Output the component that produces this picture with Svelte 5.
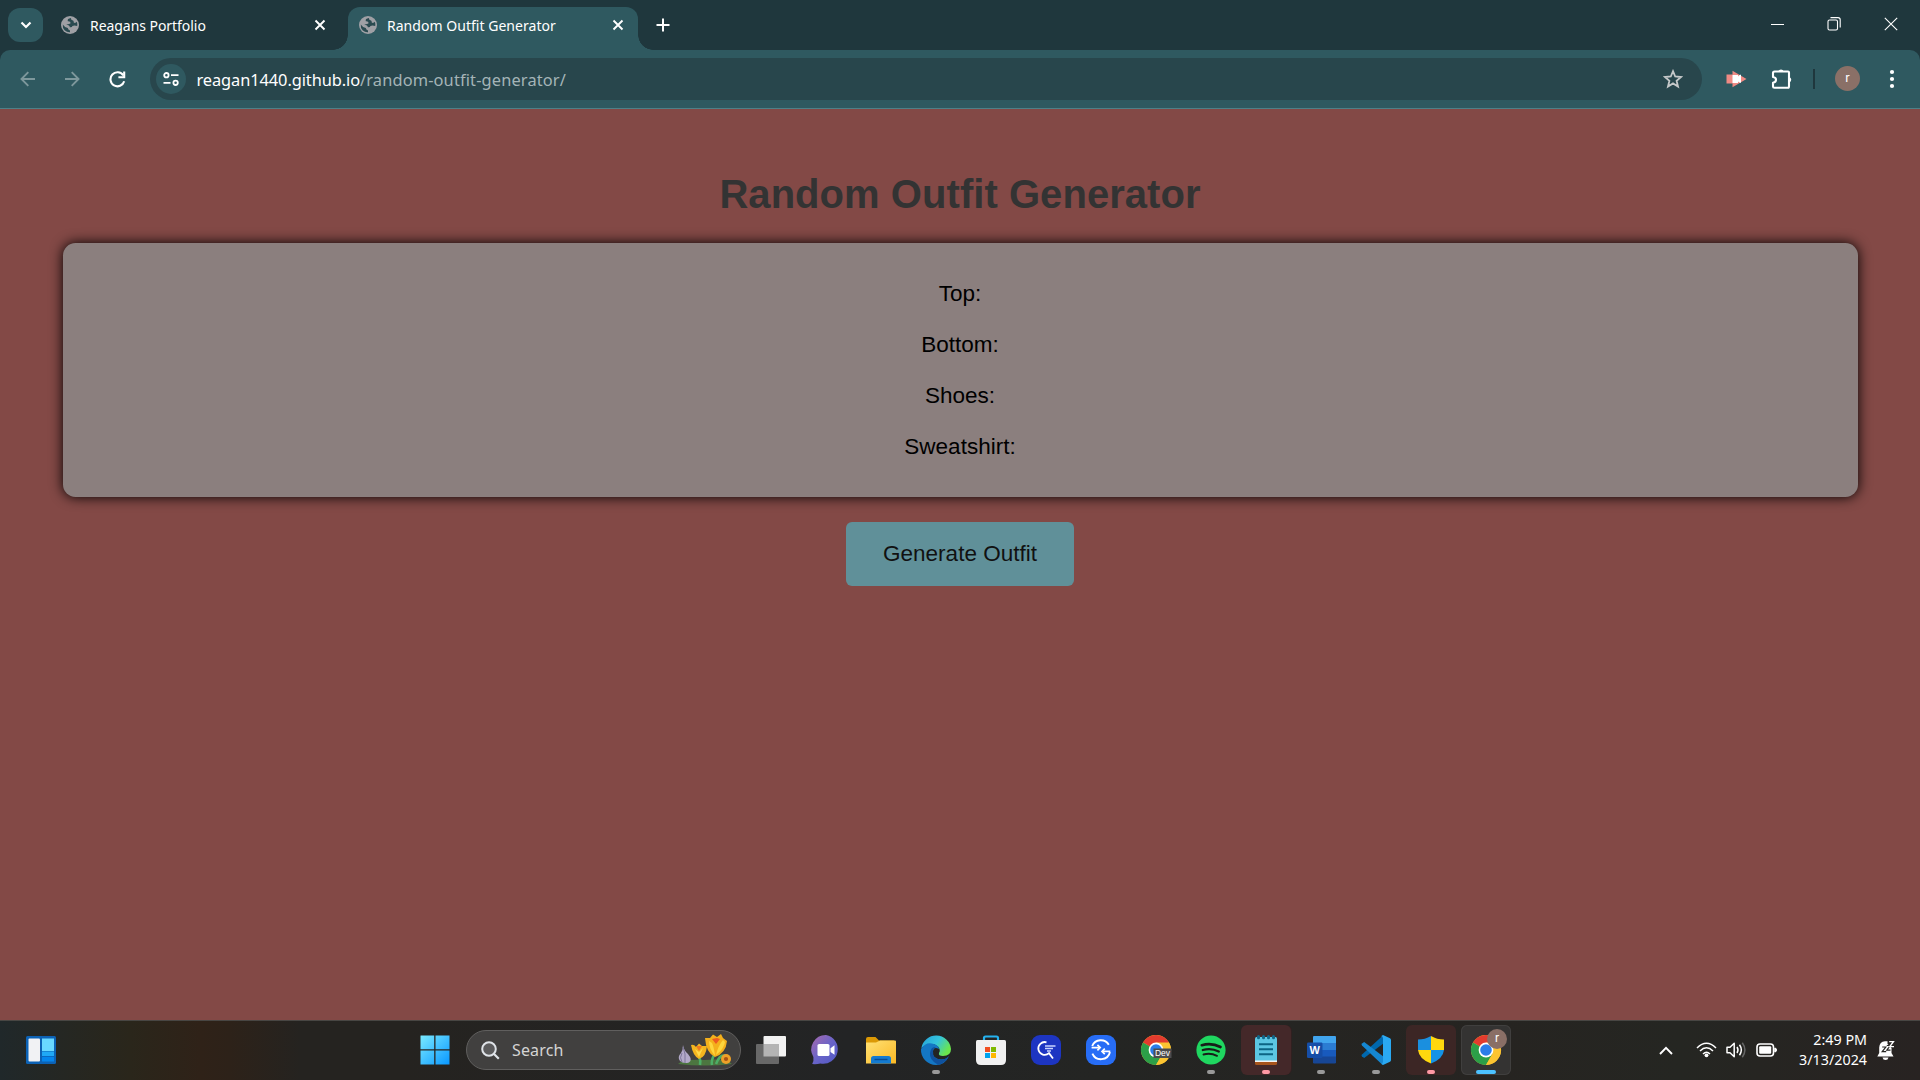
<script>
  const lines = ['Top:', 'Bottom:', 'Shoes:', 'Sweatshirt:'];
  const apps = [
    { id: 'taskview' },
    { id: 'chat' },
    { id: 'files' },
    { id: 'edge', mark: 'idle' },
    { id: 'store' },
    { id: 'search' },
    { id: 'sync' },
    { id: 'dev' },
    { id: 'spotify', mark: 'idle' },
    { id: 'notepad', mark: 'alert', stacked: true },
    { id: 'word', mark: 'idle' },
    { id: 'code', mark: 'idle' },
    { id: 'shield', mark: 'alert' },
    { id: 'chrome', mark: 'active' },
  ];
</script>

{#snippet globe()}
  <svg class="globe" width="18" height="18" viewBox="0 0 18 18">
    <circle cx="9" cy="9" r="9" fill="#9fa0a5" />
    <path d="M10 1.9 Q6 2.4 6.8 5.2 Q9.8 5 9.6 7.2 Q8.8 8.3 5.2 8.5 Q8.8 9.2 8.8 11.2 Q11.3 11.6 11.4 9.9 Q13.3 9 16.2 9.9 Q16.6 7.8 15.8 5.8 Q14 7.8 12.6 6.2 Q13.3 4.6 11.4 4.2 Q9.6 3.8 10 1.9Z M1.8 8.4 Q1.4 12 3.6 14.2 Q6 16.4 9 16.2 L9 14.4 Q6.9 13.8 6.8 12 Q3.7 11.4 1.8 8.4Z" fill="#2a4a50" />
  </svg>
{/snippet}

{#snippet cross()}
  <svg class="cross" width="12" height="12" viewBox="0 0 12 12"><path d="M1.5 1.5 L10.5 10.5 M10.5 1.5 L1.5 10.5" stroke="#fff" stroke-width="1.9" fill="none" /></svg>
{/snippet}

{#snippet chromeMark()}
  <circle cx="15" cy="15" r="15" fill="#fbc02d" />
  <path d="M15 15 L2 7.5 A15 15 0 0 1 28 7.5 Z" fill="#e33b2e" />
  <path d="M15 15 L2 7.5 A15 15 0 0 0 15 30 L22 18 Z" fill="#2c9f48" />
  <path d="M15 7.5 H28 A15 15 0 0 1 15 30 L21.5 18.7 Z" fill="#fcc431" />
  <circle cx="15" cy="15" r="7.4" fill="#fff" />
  <circle cx="15" cy="15" r="5.8" fill="#2b7de9" />
{/snippet}

<div class="screen">
  <header class="tabs">
    <button class="tabsearch" aria-label="Search tabs">
      <svg width="12" height="8" viewBox="0 0 12 8"><path d="M1.5 1.5 L6 6 L10.5 1.5" fill="none" stroke="#fff" stroke-width="2.2" /></svg>
    </button>
    <div class="tab first">{@render globe()}<span class="title">Reagans Portfolio</span>{@render cross()}</div>
    <div class="tab active">{@render globe()}<span class="title">Random Outfit Generator</span>{@render cross()}</div>
    <svg class="plus" width="14" height="14" viewBox="0 0 14 14"><path d="M7 0.5 V13.5 M0.5 7 H13.5" stroke="#fff" stroke-width="2" /></svg>
    <div class="winctl">
      <svg width="13" height="14" viewBox="0 0 13 14"><path d="M0 7.5 H13" stroke="#fff" stroke-width="1" /></svg>
      <svg width="14" height="14" viewBox="0 0 14 14"><rect x="1" y="3" width="9.5" height="10" rx="1.5" fill="none" stroke="#fff" stroke-width="1.1" /><path d="M3.5 0.6 H11 Q13.2 0.6 13.2 2.8 V10.5" fill="none" stroke="#fff" stroke-width="1.1" /></svg>
      <svg width="14" height="14" viewBox="0 0 14 14"><path d="M0.8 0.8 L13.2 13.2 M13.2 0.8 L0.8 13.2" stroke="#fff" stroke-width="1.1" /></svg>
    </div>
  </header>

  <nav class="toolbar">
    <svg class="back" width="16" height="16" viewBox="0 0 16 16"><path d="M15 8 H2 M8.3 1.2 L1.5 8 L8.3 14.8" fill="none" stroke="#7e989c" stroke-width="1.9" /></svg>
    <svg class="fwd" width="16" height="16" viewBox="0 0 16 16"><path d="M1 8 H14 M7.7 1.2 L14.5 8 L7.7 14.8" fill="none" stroke="#7e989c" stroke-width="1.9" /></svg>
    <svg class="reload" width="17" height="17" viewBox="0 0 17 17"><path d="M14.3 4.4 A7 7 0 1 0 15.2 10.3" fill="none" stroke="#fff" stroke-width="2.1" /><path d="M15.2 0.5 V6.3 H9.4" fill="none" stroke="#fff" stroke-width="2.1" /></svg>
    <div class="omnibox">
      <span class="site">
        <svg width="16" height="14" viewBox="0 0 16 14"><g fill="none" stroke="#fff" stroke-width="1.8"><circle cx="3.4" cy="3.2" r="2.2" /><path d="M8 3.2 H15.5 M0.5 10.8 H7.5" /><circle cx="12.6" cy="10.8" r="2.2" /></g></svg>
      </span>
      <span class="host">reagan1440.github.io</span><span class="path">/random-outfit-generator/</span>
      <svg class="star" width="20" height="20" viewBox="0 0 20 20"><path d="M10 2.2 L12.2 7.5 L18 8 L13.6 11.8 L15 17.5 L10 14.4 L5 17.5 L6.4 11.8 L2 8 L7.8 7.5 Z" fill="none" stroke="#c5c8c9" stroke-width="1.8" /></svg>
    </div>
    <svg class="ext" width="21" height="18" viewBox="0 0 21 18"><path d="M0.5 4.5 H6.5 V0.8 L20.5 9 L6.5 17.2 V13.5 H0.5Z" fill="#f08a84" /><path d="M6.5 5 H12 V6.5 L14 4.8 H15 V12.8 H14 L12 11.4 V13 H6.5Z" fill="#fff" /></svg>
    <svg class="puzzle" width="22" height="22" viewBox="0 0 22 22"><path d="M3.5 3.5 H17 Q18 3.5 18 4.5 V18 Q18 19.8 17 19.8 H3.5 Q2 19.8 2 18.5 V14.8 Q5 14.3 5 11.8 Q5 9.4 2 9 V5 Q2 3.5 3.5 3.5Z" fill="none" stroke="#fff" stroke-width="2.1" stroke-linejoin="round" /><path d="M7.3 3.5 A2.8 2.8 0 0 1 12.7 3.5Z M18 9 A2.8 2.8 0 0 1 18 14.5Z" fill="#fff" /></svg>
    <span class="divider"></span>
    <span class="avatar">r</span>
    <svg class="more" width="6" height="20" viewBox="0 0 6 20"><circle cx="3" cy="3" r="2.1" fill="#fff" /><circle cx="3" cy="10" r="2.1" fill="#fff" /><circle cx="3" cy="17" r="2.1" fill="#fff" /></svg>
  </nav>

  <main>
    <h1>Random Outfit Generator</h1>
    <section class="outfit">
      {#each lines as line}<p>{line}</p>{/each}
    </section>
    <button class="generate">Generate Outfit</button>
  </main>

  <footer>
    <svg class="widgets" width="30" height="28" viewBox="0 0 30 28"><rect width="30" height="28" rx="1.5" fill="#0c62b5" /><rect x="2.5" y="2.5" width="11.5" height="23" rx="1" fill="#f1f2f4" /><rect x="16" y="2.5" width="12" height="12.5" fill="#69d8ff" /><rect x="16" y="15.5" width="12" height="4.5" fill="#20a9f6" /><rect x="16" y="20.7" width="12" height="4.8" rx=".5" fill="#0585ec" /></svg>
    <svg class="start" width="30" height="30" viewBox="0 0 30 30">
      <defs><linearGradient id="win" x1="0" y1="0" x2="30" y2="30" gradientUnits="userSpaceOnUse"><stop offset="0" stop-color="#7cebff" /><stop offset="1" stop-color="#0796ff" /></linearGradient></defs>
      <path d="M0.8 0.5 H14.2 V14.2 H0.5 V0.8Z M15.5 0.5 H29.5 V14.2 H15.5Z M0.5 15.5 H14.2 V29.5 H0.5Z M15.5 15.5 H29.5 V29.5 H15.5Z" fill="url(#win)" />
    </svg>
    <div class="searchbox">
      <svg width="19" height="19" viewBox="0 0 19 19"><circle cx="8" cy="8" r="6.8" fill="#5b5b5c" stroke="#dfe3e8" stroke-width="2" /><path d="M12.8 12.8 L17.8 17.8" stroke="#dfe3e8" stroke-width="2.2" /></svg>
      <span>Search</span>
      <svg class="flowers" width="56" height="34" viewBox="0 0 56 34">
        <path d="M1 31 Q6 26 27 27 Q50 25 55 31 Q28 34 1 31Z" fill="#4c7640" />
        <path d="M22 23 Q24 28 23 32 M37 22 Q34 28 35 32 M48 23 Q43 21 39 31" stroke="#4dae66" stroke-width="2.6" fill="none" />
        <path d="M6 12 Q7 18 11 21 Q16 27 12 29.5 Q6 31 3 28 Q0 24 4 20 Q6 17 6 12Z" fill="#b3aac9" /><path d="M6 14 Q9 20 8 30 M5 20 Q2 25 5 29" stroke="#7d7699" fill="none" />
        <path d="M14 12 Q17 11 19 14 L22 10.5 L25 13 L30 13 Q29 24 22 26 Q16 23 14 12Z" fill="#f4b51f" /><path d="M18 16 L22 24 L26 15 L22 19Z" fill="#fed94a" /><path d="M19 13 L22 18 L25 13Z" fill="#ee7a21" />
        <path d="M28 5 L33 5 L36 1.5 L40 4 L44 1 L46 5 L50 8 Q49 20 38 24 Q29 20 28 5Z" fill="#f4b01c" /><path d="M32 8 Q32 16 38 23 Q37 14 35 10Z M46 7 Q41 13 39 22 Q47 16 48 9Z" fill="#fdd63d" /><path d="M35 6 L39 11 L43 6 L40 5Z" fill="#ed5b21" />
        <circle cx="49" cy="26" r="5" fill="#eea028" /><circle cx="49" cy="26" r="2.1" fill="#a65114" />
      </svg>
    </div>

    <div class="apps">
      {#each apps as app}
        <div class="app {app.mark ?? ''}" class:stacked={app.stacked}>
          <svg width="36" height="36" viewBox="-3 -3 36 36">
            {#if app.id === 'taskview'}
              <rect x="7.5" y="1" width="22.5" height="20.5" rx="1" fill="#f2f2f2" /><rect x="0" y="9" width="23" height="20" rx="1" fill="#686868" /><path d="M7.5 9 H23 V21.5 H7.5Z" fill="#b4b4b4" />
            {:else if app.id === 'chat'}
              <defs><linearGradient id="chat" x1="0" y1="0" x2="1" y2="1"><stop offset="0" stop-color="#a969ac" /><stop offset=".5" stop-color="#6a64c8" /><stop offset="1" stop-color="#5058c4" /></linearGradient></defs>
              <path d="M15 0 A14.5 14.5 0 1 1 9.5 28.5 Q5 29.5 1.2 29 Q3 26 2.4 22 A14.5 14.5 0 0 1 15 0Z" fill="url(#chat)" /><rect x="6.5" y="9" width="12" height="12" rx="1.6" fill="#fff" /><path d="M19.5 13.2 L23.5 10.2 V19.8 L19.5 17Z" fill="#fff" />
            {:else if app.id === 'files'}
              <path d="M0 4 Q0 2 2 2 H9.5 L13 5.5 H28 V14 H0Z" fill="#dc9905" /><defs><linearGradient id="fold" x1="0" y1="0" x2="1" y2="1"><stop offset="0" stop-color="#ffe175" /><stop offset="1" stop-color="#fbb924" /></linearGradient></defs><path d="M0 7.5 H10 L14 5.5 H29 Q30 5.5 30 6.5 V28.5 H0Z" fill="url(#fold)" /><path d="M5 28.5 V23.5 Q5 21 7.5 21 H22.5 Q25 21 25 23.5 V28.5Z" fill="#147bd1" /><path d="M8.5 24.5 H21.5" stroke="#084c95" stroke-width="1.4" />
            {:else if app.id === 'edge'}
              <defs><linearGradient id="e1" x1="0" y1="0" x2="1" y2=".5"><stop offset="0" stop-color="#259fd9" /><stop offset=".55" stop-color="#34c4dc" /><stop offset="1" stop-color="#6ae64d" /></linearGradient></defs>
              <path d="M0.3 13 A15 15 0 0 1 30 14 Q30 21 22 21 Q17 21 18 18 Q20 15 17 11.5 Q10 6 0.3 13Z" fill="url(#e1)" />
              <path d="M0 14 Q5 6 13 9 Q18 11 18 14 Q13 11 12 16 Q11 24 20 24.5 Q25 24.5 28 21 Q24 30 15 30 A15 15 0 0 1 0 14Z" fill="#1477c4" /><path d="M12 16 Q11 24 20 24.5 Q25 24.5 28 21 Q24 29 17 29.7 Q8 25 9 18 Q10 11 15 12 Q12 13 12 16Z" fill="#0f529f" />
            {:else if app.id === 'store'}
              <path d="M8 7 V3 Q8 1.5 9.5 1.5 H20.5 Q22 1.5 22 3 V7" fill="none" stroke="#25b2ef" stroke-width="2.2" /><path d="M0 6.5 Q0 5 1.5 5 H28.5 Q30 5 30 6.5 V25 Q30 30 25 30 H5 Q0 30 0 25Z" fill="#f1f1f1" /><path d="M9 12 H14 V17 H9Z" fill="#f14f21" /><path d="M15 12 H20 V17 H15Z" fill="#7eb900" /><path d="M9 18 H14 V23 H9Z" fill="#00a3ee" /><path d="M15 18 H20 V23 H15Z" fill="#feb800" />
            {:else if app.id === 'search'}
              <rect width="30" height="30" rx="9" fill="#1d35c2" /><path d="M15.5 7.3 A6.4 6.4 0 1 0 18 18.2 L22 23.5" fill="none" stroke="#fff" stroke-width="1.8" /><path d="M14 11 H24.5 M14 13.5 H22 M16 16 H20" stroke="#c9d3ff" stroke-width="1.4" />
            {:else if app.id === 'sync'}
              <rect width="30" height="30" rx="9" fill="#276df6" /><path d="M5.6 12.6 H13 M6.2 11 A9.3 9.3 0 0 1 22.8 9.8 M24.3 16.4 H17 M24 17 A9.3 9.3 0 0 1 6.4 18.6" fill="none" stroke="#fff" stroke-width="1.9" /><path d="M11.4 9.8 L14.2 12.6 L11.4 15.4 M18.8 13.6 L16 16.4 L18.8 19.2" fill="none" stroke="#fff" stroke-width="1.7" />
            {:else if app.id === 'dev'}
              {@render chromeMark()}<rect x="12.5" y="13.5" width="18" height="9.5" fill="#4c4c4e" /><text class="dev" x="21.5" y="21" text-anchor="middle">Dev</text>
            {:else if app.id === 'spotify'}
              <circle cx="15" cy="15" r="14.6" fill="#1fd760" /><path d="M5.8 10.2 Q15.5 7.4 24.5 12" stroke="#171d19" stroke-width="2.7" fill="none" stroke-linecap="round" /><path d="M6.8 15 Q15 12.5 22.8 16.5" stroke="#171d19" stroke-width="2.3" fill="none" stroke-linecap="round" /><path d="M7.5 19.5 Q14.5 17.5 21 20.8" stroke="#171d19" stroke-width="1.9" fill="none" stroke-linecap="round" />
            {:else if app.id === 'notepad'}
              <path d="M4 25 H26 V28.5 Q26 30 24.5 30 H5.5 Q4 30 4 28.5Z" fill="#a7541c" /><path d="M4 25 H26 V27 H4Z" fill="#f4f4f4" /><path d="M4 4 Q4 2 5.5 2 H24.5 Q26 2 26 4 V25.5 H4Z" fill="#5cc6e3" /><path d="M8 9.2 H22 M8 14.2 H22 M8 19.2 H22" stroke="#0c6484" stroke-width="1.9" /><path d="M7.5 1.6 V2.8 M12.5 1.6 V2.8 M17.5 1.6 V2.8 M22.5 1.6 V2.8" stroke="#12688a" stroke-width="3" stroke-linecap="round" />
            {:else if app.id === 'word'}
              <rect x="7" y="1" width="23" height="27.5" rx="1.2" fill="#174695" /><path d="M7 15 H30 V21.5 H7Z" fill="#185abd" /><path d="M7 8 H30 V15 H7Z" fill="#2b7cd3" /><path d="M8.2 1 H28.8 Q30 1 30 2.2 V8 H7 V2.2 Q7 1 8.2 1Z" fill="#41a5ee" /><rect x="1" y="7.5" width="15.5" height="15.5" rx="1.2" fill="#164ea7" /><text class="word" x="8.6" y="18.7" text-anchor="middle">W</text>
            {:else if app.id === 'code'}
              <path d="M22 0.5 V8.7 L3.2 23 L1 21.5 Q0 20.5 1 19.5Z" fill="#0068ae" /><path d="M22 29.5 V21.3 L3.2 7 L1 8.5 Q0 9.5 1 10.5 L20 28.5Z" fill="#1587d2" /><path d="M22 0 L29 3.3 Q30 3.8 30 5 V25 Q30 26.2 29 26.7 L22 30 L20 28.8 Q22 29 22 26.5 V3.5 Q22 1 20 1.2Z" fill="#2aa9f2" />
            {:else if app.id === 'shield'}
              <path d="M15 1 Q9 4.5 2 4.5 V15 H15Z" fill="#1a8fdf" /><path d="M15 1 Q21 4.5 28 4.5 V15 H15Z" fill="#ffd80e" /><path d="M2 15 H15 V28.5 Q3 24 2 15Z" fill="#ffd80e" /><path d="M28 15 H15 V28.5 Q27 24 28 15Z" fill="#1493e6" />
            {:else}
              {@render chromeMark()}
            {/if}
          </svg>
          {#if app.id === 'chrome'}<span class="badge">r</span>{/if}
          {#if app.mark}<i></i>{/if}
        </div>
      {/each}
    </div>

    <div class="tray">
      <svg class="up" width="14" height="9" viewBox="0 0 14 9"><path d="M1 8 L7 1.8 L13 8" fill="none" stroke="#fff" stroke-width="1.9" /></svg>
      <svg class="wifi" width="21" height="16" viewBox="0 0 21 16"><g fill="none" stroke="#fff" stroke-width="1.5"><path d="M1 6 Q10.5 -3.5 20 6" /><path d="M4 9 Q10.5 2.5 17 9" /><path d="M7 12 Q10.5 8.5 14 12" /></g><circle cx="10.5" cy="13.3" r="1.9" fill="#fff" /></svg>
      <svg class="vol" width="21" height="18" viewBox="0 0 21 18"><g fill="none" stroke="#fff" stroke-width="1.5"><path d="M1 6.2 H4 L8.2 2.3 V15.7 L4 11.8 H1Z" stroke-linejoin="round" /><path d="M11 6 Q13 9 11 12 M13.5 3.8 Q17.2 9 13.5 14.2" /><path d="M16.3 1.7 Q21.5 9 16.3 16.3" stroke="#666" /></g></svg>
      <svg class="bat" width="21" height="14" viewBox="0 0 21 14"><rect x="1" y="1" width="16.5" height="12" rx="3" fill="none" stroke="#fff" stroke-width="1.6" /><rect x="3.2" y="3.2" width="12" height="7.6" rx="1" fill="#fff" /><path d="M18.8 5 Q20.5 5 20.5 7 Q20.5 9 18.8 9Z" fill="#fff" stroke="#fff" /></svg>
      <div class="clock"><span>2:49 PM</span><span>3/13/2024</span></div>
      <svg class="bell" width="19" height="21" viewBox="0 0 19 21"><path d="M2.2 13 V7.5 Q2.5 1.8 8 1.2 H10.5 V4 L14.5 8 V13 L16.5 16.5 H0.3Z" fill="#fff" /><path d="M5.5 17.5 H11.5 Q11 20 8.5 20 Q6 20 5.5 17.5Z" fill="#fff" /><path d="M5.2 7 H8.8 L5.2 11.6 H9.2" stroke="#262522" stroke-width="1.2" fill="none" /><path d="M9.8 5.5 H13.2 L9.8 10.2 H13.5" stroke="#262522" stroke-width="1.2" fill="none" /><path d="M12.2 1.6 H16.4 L12.8 6.6 H17" stroke="#fff" stroke-width="1.4" fill="none" /></svg>
    </div>
  </footer>
</div>

<style>
  :global(body) { margin: 0; }
  .screen { width: 1920px; height: 1080px; display: flex; flex-direction: column; overflow: hidden; background: #834946; font-family: 'Noto Sans', sans-serif; color: #fff; }
  button { border: 0; padding: 0; font: inherit; }
  svg { display: block; flex: none; }

  .tabs { height: 50px; flex: none; display: flex; background: #1f373d; box-sizing: border-box; padding-left: 8px; }
  .tabsearch { width: 35px; height: 34px; margin-top: 8px; border-radius: 12px; background: #2f5960; display: flex; align-items: center; justify-content: center; }
  .tab { box-sizing: border-box; display: flex; align-items: center; height: 42px; margin-top: 8px; padding-bottom: 8px; font-size: 14px; }
  .tab.first { width: 305px; padding-left: 18px; }
  .tab.active { position: relative; width: 290px; margin-top: 7px; height: 43px; padding: 1px 0 8px 11px; background: #2f5960; border-radius: 12px 12px 0 0; }
  .tab.active::before, .tab.active::after { content: ''; position: absolute; bottom: 0; width: 15px; height: 15px; }
  .tab.active::before { left: -15px; background: radial-gradient(circle at 0 0, transparent 14.5px, #2f5960 15px); }
  .tab.active::after { right: -15px; background: radial-gradient(circle at 100% 0, transparent 14.5px, #2f5960 15px); }
  .title { margin-left: 11px; padding-top: 2px; white-space: nowrap; line-height: 20px; }
  .first .title { letter-spacing: -0.05px; }
  .active .title { margin-left: 10px; letter-spacing: 0.03px; }
  .cross { margin-left: auto; }
  .first .cross { margin-right: 22px; }
  .active .cross { margin-right: 14px; }
  .plus { margin: 18px 0 0 18px; }
  .winctl { margin: 17px 22px 0 auto; display: flex; gap: 43px; }

  .toolbar { height: 59px; flex: none; box-sizing: border-box; display: flex; align-items: center; background: #1f373d; border-bottom: 1px solid #4f8088; position: relative; z-index: 0; }
  .toolbar::before { content: ''; position: absolute; inset: 0; z-index: -1; background: #2f5960; border-radius: 10px 10px 0 0; }
  .back { margin-left: 20px; }
  .fwd { margin-left: 28px; }
  .reload { margin-left: 29px; }
  .omnibox { width: 1552px; height: 42px; margin-left: 24px; border-radius: 21px; background: #28464c; display: flex; align-items: center; font-size: 16.4px; }
  .site { width: 30px; height: 30px; margin-left: 6px; margin-right: 10.5px; border-radius: 50%; background: #2f5960; display: flex; align-items: center; justify-content: center; }
  .host, .path { line-height: 24px; white-space: nowrap; padding-top: 1px; }
  .host { letter-spacing: -0.09px; }
  .path { color: #a4b4b7; letter-spacing: 0.14px; }
  .star { margin-left: auto; margin-right: 19px; }
  .ext { margin-left: 24px; }
  .puzzle { margin-left: 24px; }
  .divider { width: 2px; height: 20px; margin-left: 20px; background: #1f373d; }
  .avatar { width: 25px; height: 25px; margin-left: 20px; margin-bottom: 1px; border-radius: 50%; background: #8a7067; text-align: center; font: 13px/24px Roboto, sans-serif; }
  .more { margin-left: 29px; }

  main { height: 911px; flex: none; display: flex; flex-direction: column; align-items: center; font-family: 'Liberation Sans', Arial, sans-serif; color: #000; }
  h1 { margin: 62px 0 0; height: 72px; font-size: 40px; line-height: 46px; letter-spacing: 0.05px; color: #333; white-space: nowrap; }
  .outfit { box-sizing: border-box; width: 1795px; height: 254px; padding-top: 38px; border-radius: 12.5px; background: #8b7f7e; box-shadow: 0 0 12.5px rgba(0, 0, 0, 1); text-align: center; font-size: 22.5px; }
  .outfit p { margin: 0 0 25px; line-height: 26px; }
  .generate { width: 228px; height: 64px; margin-top: 25px; border-radius: 6px; background: #609099; font-size: 22.5px; color: #111; }

  footer { height: 60px; flex: none; box-sizing: border-box; display: flex; align-items: center; padding-bottom: 1px; border-top: 1px solid #484643; background: linear-gradient(90deg, #20282a 0, #2a261b 130px, #2f2218 200px, #2d2219 230px, #252320 300px, #252320 400px, #232425 850px, #242523 1100px, #262421 1500px, #252622 1680px, #282322 1920px); font-size: 16px; }
  .widgets { margin-left: 26px; }
  .start { margin-left: 364px; }
  .searchbox { box-sizing: border-box; width: 275px; height: 40px; margin-left: 16px; border: 1px solid #605f5e; border-radius: 20px; background: #41403f; display: flex; align-items: center; padding-left: 14px; color: #d5d4d4; }
  .searchbox span { margin-left: 12px; letter-spacing: 0.15px; }
  .flowers { margin-left: auto; margin-right: 7px; }
  .apps { display: flex; height: 50px; margin-left: 5px; gap: 5px; }
  .app { position: relative; box-sizing: border-box; width: 50px; height: 50px; border-radius: 6px; display: flex; justify-content: center; padding-top: 7px; }
  .app i { position: absolute; bottom: 1px; left: 21px; width: 8px; height: 4px; border-radius: 2px; background: #999; }
  .alert { background: #3c2625; }
  .alert i { background: #ff99a4; }
  .stacked { background: #442829; box-shadow: 1px 0 0 #302020; }
  .active.app { background: #343332; box-shadow: inset 0 0 0 1px #403f3e; }
  .active i { left: 15px; width: 20px; background: #4cc2ff; }
  .badge { position: absolute; left: 26px; top: 4px; width: 20px; height: 20px; border-radius: 50%; background: #8a6f66; text-align: center; font: 12px/19px Roboto, sans-serif; }
  .dev { font: 8.5px 'Liberation Sans', sans-serif; fill: #fff; }
  .word { font: bold 11px 'Liberation Sans', sans-serif; fill: #fff; }

  .tray { margin-left: auto; display: flex; align-items: center; }
  .wifi { margin-left: 23px; }
  .vol { margin-left: 9px; }
  .bat { margin-left: 9px; }
  .clock { width: 90px; display: flex; flex-direction: column; text-align: right; font-size: 14.3px; line-height: 20px; white-space: nowrap; }
  .bell { margin: 0 24px 0 10px; }
</style>
